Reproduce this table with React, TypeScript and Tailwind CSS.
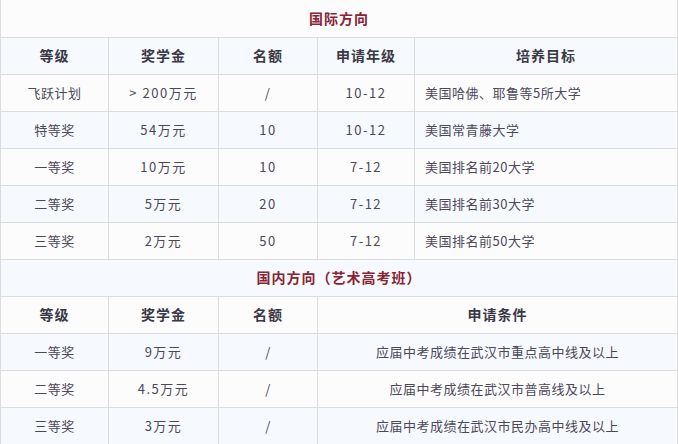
import React from 'react'

const intl = [
  ['飞跃计划', '> 200万元', '/', '10-12', '美国哈佛、耶鲁等5所大学'],
  ['特等奖', '54万元', '10', '10-12', '美国常青藤大学'],
  ['一等奖', '10万元', '10', '7-12', '美国排名前20大学'],
  ['二等奖', '5万元', '20', '7-12', '美国排名前30大学'],
  ['三等奖', '2万元', '50', '7-12', '美国排名前50大学'],
]

const domestic = [
  ['一等奖', '9万元', '/', '应届中考成绩在武汉市重点高中线及以上'],
  ['二等奖', '4.5万元', '/', '应届中考成绩在武汉市普高线及以上'],
  ['三等奖', '3万元', '/', '应届中考成绩在武汉市民办高中线及以上'],
]

const td = 'border border-[#dcdcdc] h-[37px] p-0 text-center align-middle'
const body = 'text-[13px] tracking-[0.5px] text-[#4d4858]'
const num = 'text-[13px] tracking-[1.5px] text-[#4d4858]'
const head = 'text-[14px] tracking-[1px] font-bold text-[#3a3845]'
const title = 'text-[14px] tracking-[1px] font-bold text-[#8a2333]'

export default function App() {
  return (
    <div className="w-[678px] h-[444px] bg-white overflow-hidden" style={{ fontFamily: '"Noto Sans CJK SC", "Noto Sans", sans-serif' }}>
      <table className="table-fixed border-collapse w-[677px]">
        <colgroup>
          <col className="w-[108px]" />
          <col className="w-[110px]" />
          <col className="w-[99px]" />
          <col className="w-[97px]" />
          <col className="w-[263px]" />
        </colgroup>
        <tbody>
          <tr className="bg-[#fcfcfd]">
            <td colSpan={5} className={`${td} ${title} border-t-0 h-[36px]`}>国际方向</td>
          </tr>
          <tr className="bg-[#f6f9fe]">
            {['等级', '奖学金', '名额', '申请年级', '培养目标'].map((h) => (
              <td key={h} className={`${td} ${head}`}>{h}</td>
            ))}
          </tr>
          {intl.map((r, i) => (
            <tr key={r[0]} className={i % 2 === 0 ? 'bg-[#fcfcfd]' : 'bg-[#f6f9fe]'}>
              <td className={`${td} ${body}`}>{r[0]}</td>
              <td className={`${td} ${num}`}>{r[1]}</td>
              <td className={`${td} ${num}`}>{r[2]}</td>
              <td className={`${td} ${num}`}>{r[3]}</td>
              <td className={`${td} ${body} text-left pl-[10px]`}>{r[4]}</td>
            </tr>
          ))}
          <tr className="bg-[#f6f9fe]">
            <td colSpan={5} className={`${td} ${title}`}>国内方向（艺术高考班）</td>
          </tr>
          <tr className="bg-[#fcfcfd]">
            {['等级', '奖学金', '名额'].map((h) => (
              <td key={h} className={`${td} ${head}`}>{h}</td>
            ))}
            <td colSpan={2} className={`${td} ${head}`}>申请条件</td>
          </tr>
          {domestic.map((r, i) => (
            <tr key={r[0]} className={i % 2 === 0 ? 'bg-[#f6f9fe]' : 'bg-[#fcfcfd]'}>
              <td className={`${td} ${body}`}>{r[0]}</td>
              <td className={`${td} ${num}`}>{r[1]}</td>
              <td className={`${td} ${body}`}>{r[2]}</td>
              <td colSpan={2} className={`${td} ${body}`}>{r[3]}</td>
            </tr>
          ))}
        </tbody>
      </table>
    </div>
  )
}
